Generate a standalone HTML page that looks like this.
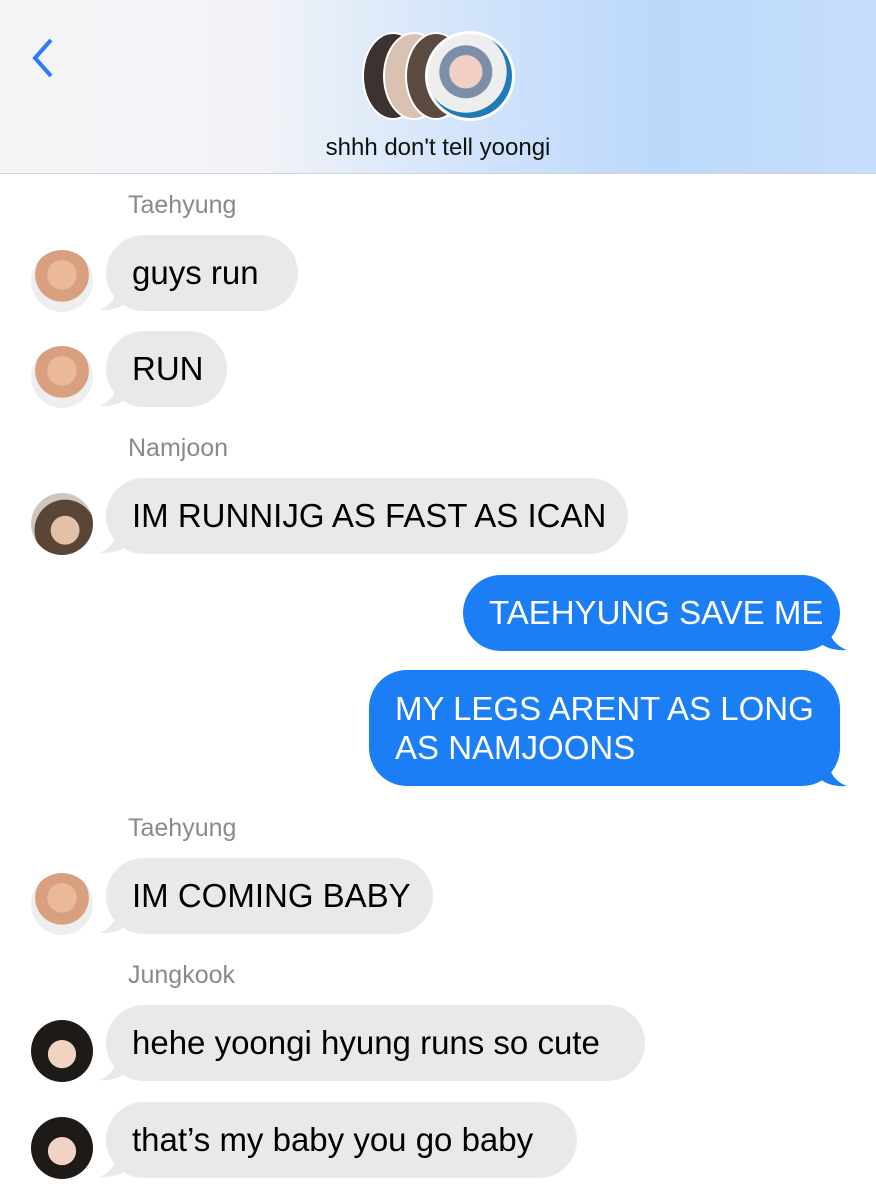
<!DOCTYPE html>
<html><head><meta charset="utf-8"><style>
*{margin:0;padding:0;box-sizing:border-box}
body{width:876px;height:1200px;background:#fff;position:relative;overflow:hidden;font-family:"Liberation Sans",sans-serif}
.hdr{position:absolute;left:0;top:0;width:876px;height:174px;background:linear-gradient(90deg,#f5f5f7 0%,#f1f3f7 30%,#d6e6fb 50%,#bcd8fb 75%,#c6defb 100%);border-bottom:1px solid #d4d4d8}
.title{position:absolute;top:134px;left:0;width:876px;text-align:center;font-size:24px;color:#111}
.lbl{position:absolute;left:128px;font-size:25px;color:#8a8a8e}
.b{position:absolute;height:76px;border-radius:38px;font-size:33px;line-height:76px;padding-left:26px;white-space:nowrap;color:#000;background:#e9e9eb}
.s{background:#1c7ef5;color:#fff}
.av{position:absolute;left:31px;width:62px;height:62px;border-radius:50%;overflow:hidden}
.t{background:radial-gradient(circle at 50% 40%,#e9b99a 0 30%,#d8a07f 31% 55%,#eee 56%)}
.n{background:radial-gradient(circle at 55% 60%,#e2c1a8 0 28%,#5a4636 29% 60%,#cfc6c0 61%)}
.j{background:radial-gradient(circle at 50% 55%,#f0d3c2 0 30%,#1e1a18 31%)}
.tail{position:absolute;width:30px;height:24px}
</style></head><body>
<div class="hdr">
<svg style="position:absolute;left:28px;top:36px" width="30" height="44"><path d="M23 4 L7 22 L23 40" stroke="#2d7cf6" stroke-width="4" fill="none"/></svg>
<div style="position:absolute;left:362px;top:32px;width:62px;height:88px;border-radius:50%;background:#3a3330;border:2px solid #fff"></div>
<div style="position:absolute;left:383px;top:32px;width:62px;height:88px;border-radius:50%;background:#d9c2b2;border:2px solid #fff"></div>
<div style="position:absolute;left:405px;top:32px;width:62px;height:88px;border-radius:50%;background:#5a4a40;border:2px solid #fff"></div>
<div style="position:absolute;left:425px;top:31px;width:90px;height:90px;border-radius:50%;background:radial-gradient(circle at 45% 45%,#f1cfc5 0 25%,#7d8ea8 26% 40%,#eee 41% 62%,#1f7ab8 63%);border:3px solid #fff"></div>
<div class="title">shhh don't tell yoongi</div>
</div>

<div class="lbl" style="top:191px">Taehyung</div>
<div class="av t" style="top:250px"></div>
<svg class="tail" style="left:96px;top:287px"><path d="M22 0 C20 12 12 20 3 23 C14 24 24 21 30 16 Z" fill="#e9e9eb"/></svg>
<div class="b" style="left:106px;top:235px;width:192px">guys run</div>

<div class="av t" style="top:346px"></div>
<svg class="tail" style="left:96px;top:383px"><path d="M22 0 C20 12 12 20 3 23 C14 24 24 21 30 16 Z" fill="#e9e9eb"/></svg>
<div class="b" style="left:106px;top:331px;width:121px">RUN</div>

<div class="lbl" style="top:434px">Namjoon</div>
<div class="av n" style="top:493px"></div>
<svg class="tail" style="left:96px;top:530px"><path d="M22 0 C20 12 12 20 3 23 C14 24 24 21 30 16 Z" fill="#e9e9eb"/></svg>
<div class="b" style="left:106px;top:478px;width:522px">IM RUNNIJG AS FAST AS ICAN</div>

<svg class="tail" style="left:820px;top:627px"><path d="M8 0 C10 12 18 20 27 23 C16 24 6 21 0 16 Z" fill="#1c7ef5"/></svg>
<div class="b s" style="left:463px;top:575px;width:377px">TAEHYUNG SAVE ME</div>

<svg class="tail" style="left:820px;top:763px"><path d="M8 0 C10 12 18 20 27 23 C16 24 6 21 0 16 Z" fill="#1c7ef5"/></svg>
<div class="b s" style="left:369px;top:670px;width:471px;height:116px;line-height:39px;padding-top:19px;white-space:normal">MY LEGS ARENT AS LONG<br>AS NAMJOONS</div>

<div class="lbl" style="top:814px">Taehyung</div>
<div class="av t" style="top:873px"></div>
<svg class="tail" style="left:96px;top:910px"><path d="M22 0 C20 12 12 20 3 23 C14 24 24 21 30 16 Z" fill="#e9e9eb"/></svg>
<div class="b" style="left:106px;top:858px;width:327px">IM COMING BABY</div>

<div class="lbl" style="top:961px">Jungkook</div>
<div class="av j" style="top:1020px"></div>
<svg class="tail" style="left:96px;top:1057px"><path d="M22 0 C20 12 12 20 3 23 C14 24 24 21 30 16 Z" fill="#e9e9eb"/></svg>
<div class="b" style="left:106px;top:1005px;width:539px">hehe yoongi hyung runs so cute</div>

<div class="av j" style="top:1117px"></div>
<svg class="tail" style="left:96px;top:1154px"><path d="M22 0 C20 12 12 20 3 23 C14 24 24 21 30 16 Z" fill="#e9e9eb"/></svg>
<div class="b" style="left:106px;top:1102px;width:471px">that’s my baby you go baby</div>
</body></html>
